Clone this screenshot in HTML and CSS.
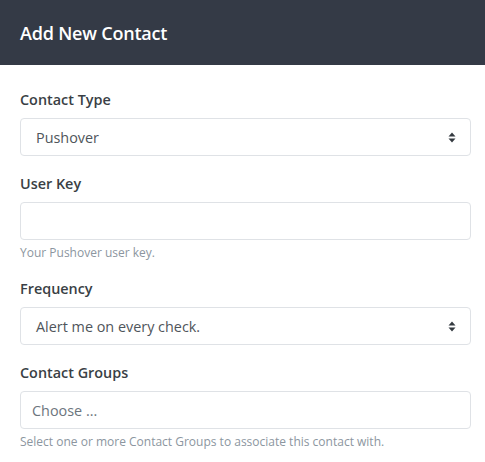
FILE: index.html
```html
<!DOCTYPE html>
<html>
<head>
<meta charset="utf-8">
<link rel="stylesheet" href="styles.css">
</head>
<body>
<div class="modal">
  <header class="modal-header">
    <h1 class="modal-title">Add New Contact</h1>
  </header>
  <form class="modal-body">
    <div class="form-group">
      <label class="form-label">Contact Type</label>
      <div class="select">
        <span class="select-value">Pushover</span>
        <svg class="select-arrow" width="8" height="11" viewBox="0 0 8 11"><path d="M4 0.5 L7.5 4.5 H0.5 Z" fill="#343a40"/><path d="M4 10.5 L7.5 6.5 H0.5 Z" fill="#343a40"/></svg>
      </div>
    </div>
    <div class="form-group">
      <label class="form-label">User Key</label>
      <div class="input"></div>
      <small class="help">Your Pushover user key.</small>
    </div>
    <div class="form-group">
      <label class="form-label">Frequency</label>
      <div class="select">
        <span class="select-value">Alert me on every check.</span>
        <svg class="select-arrow" width="8" height="11" viewBox="0 0 8 11"><path d="M4 0.5 L7.5 4.5 H0.5 Z" fill="#343a40"/><path d="M4 10.5 L7.5 6.5 H0.5 Z" fill="#343a40"/></svg>
      </div>
    </div>
    <div class="form-group">
      <label class="form-label">Contact Groups</label>
      <div class="input"><span class="placeholder">Choose ...</span></div>
      <small class="help">Select one or more Contact Groups to associate this contact with.</small>
    </div>
  </form>
</div>
</body>
</html>
```

FILE: styles.css
```css
* { box-sizing: border-box; }
html, body { margin: 0; padding: 0; background: #fff; }
body { font-family: "Open Sans", "Noto Sans", sans-serif; width: 485px; }
.modal-header {
  background: #343a46;
  height: 65px;
  display: flex;
  align-items: center;
  padding: 0 20px;
}
.modal-title {
  margin: 0;
  color: #fff;
  font-size: 18px;
  font-weight: 600;
  line-height: 1;
  letter-spacing: -0.2px;
}
.modal-body {
  padding: 24px 14px 0 20px;
  display: flex;
  flex-direction: column;
  gap: 17px;
}
.form-group { display: flex; flex-direction: column; }
.form-label {
  font-size: 14.4px;
  font-weight: 600;
  color: #3a3f45;
  line-height: 21px;
  margin-bottom: 8px;
}
.select, .input {
  height: 38px;
  border: 1px solid #dfe2e6;
  border-radius: 4px;
  display: flex;
  align-items: center;
  padding: 0 12px 0 15px;
  font-size: 14.4px;
  color: #4f555b;
}
.input { padding-left: 11px; }
.select-value { flex: 1; }
.select-arrow { display: block; margin-right: 2px; }
.placeholder { color: #6c757d; }
.help {
  font-size: 12px;
  color: #8c96a0;
  line-height: 16px;
  margin-top: 5px;
}
```
